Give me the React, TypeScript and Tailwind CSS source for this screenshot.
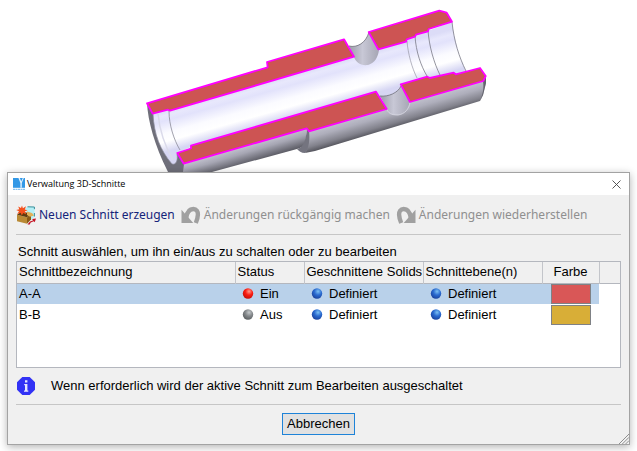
import type { ReactNode } from "react";

type Section = {
  name: string;
  status: "Ein" | "Aus";
  solids: string;
  planes: string;
  color: "red" | "yellow";
  selected?: boolean;
};

const SECTIONS: Section[] = [
  { name: "A-A", status: "Ein", solids: "Definiert", planes: "Definiert", color: "red", selected: true },
  { name: "B-B", status: "Aus", solids: "Definiert", planes: "Definiert", color: "yellow" },
];

const DOTS = {
  red: ["#ff9a8a", "#fb1d12", "#c80f08"],
  gray: ["#c4c8ca", "#85898c", "#5d6163"],
  blue: ["#7cc0f2", "#2b6bd0", "#1b45a0"],
};

const SWATCHES = {
  red: "bg-[#d95757]",
  yellow: "bg-[#d8ae37]",
};

// ─── Icons ────────────────────────────────────────────────────────────────────

function Dot({ tone }: Readonly<{ tone: keyof typeof DOTS }>) {
  const [light, mid, dark] = DOTS[tone];
  return (
    <svg viewBox="0 0 12 12" aria-hidden className="size-3 shrink-0">
      <defs>
        <radialGradient id={`dot-${tone}`} cx="0.6" cy="0.3" r="0.7">
          <stop offset="0" stopColor={light} />
          <stop offset="0.5" stopColor={mid} />
          <stop offset="1" stopColor={dark} />
        </radialGradient>
      </defs>
      <circle cx="6" cy="5.5" r="5.2" fill={`url(#dot-${tone})`} />
    </svg>
  );
}

function AppIcon() {
  return (
    <svg viewBox="0 0 12 12" aria-hidden className="size-3 shrink-0">
      <path d="M0 0h12v9.8H0z" fill="#3398e6" />
      <path d="M5.4 0h1.5l1.3 3.4L9.8 0h1L8.8 5v4.8H7.4V5z" fill="#e4f2fd" />
      <path d="M0 11.3h12" stroke="#6fb5ec" strokeWidth="1" strokeDasharray="2 .5" />
    </svg>
  );
}

function NewSectionIcon() {
  return (
    <svg viewBox="0 0 20 20" aria-hidden className="size-5 shrink-0">
      <path d="M9 3.5 12 1.5l6.5.6v9.5L15 15z" fill="#b5f0f6" />
      <path d="M11.5 1.8 18.4 2v2.2M18.4 8v3.5" fill="none" stroke="#3b8f9b" strokeWidth="1" />
      <path d="M1 9.8 11 12.3v6.4L1 16.2z" fill="#b98a35" />
      <path d="m11 12.3 4-4v6.2l-4 4.2z" fill="#8a5a14" />
      <path d="m1 9.8 4-3 10 1.5-4 4z" fill="#5e3c0d" />
      <path d="m11 6.5 5 1.5 2 2.5-4 1.2-3-1.7z" fill="#e1b15a" />
      <path d="m6 .5.9 2.7L10 1.2 8.8 4.4l2.7.8-2.7 1.2L10.4 9.5 7.2 7.9 5.8 10.5 4.7 7.7 1.2 9l1.8-2.8L.2 4.9l3.1-.6L2.2 1.4 5 3z" fill="#f4501c" />
      <path d="m11.5 19.5 2.5-3 3-1-.8-1.5 3.8-.5-1.3 3.8-1-1-3 1.2-1 2z" fill="#c41424" />
    </svg>
  );
}

function UndoIcon({ mirrored = false }: Readonly<{ mirrored?: boolean }>) {
  return (
    <svg viewBox="0 0 20 18" aria-hidden className="h-[18px] w-5 shrink-0">
      <g transform={mirrored ? "matrix(-1 0 0 1 20 0)" : undefined}>
        <path d="M.5 3.8V17h11.8z" fill="#a0a0a0" />
        <path
          d="M5.2 11.8C6 6.2 8.8 3 12.3 3c3.4 0 4.7 2.6 4.6 5.6-.1 3-.8 5.4-2.1 8.4"
          fill="none"
          stroke="#a0a0a0"
          strokeWidth="4.4"
        />
      </g>
    </svg>
  );
}

function InfoIcon() {
  return (
    <svg viewBox="0 0 18 18" aria-hidden className="size-[18px] shrink-0">
      <path d="M5.3 0h7.4L18 5.3v7.4L12.7 18H5.3L0 12.7V5.3z" fill="#3232f5" />
      <path d="M8 3.2h2.4v2.2H8zM7.2 7h3.2v6.6h.9v1.2H7v-1.2h1V8.2h-.8z" fill="#e6e6ff" />
    </svg>
  );
}

// ─── Cut shaft model ──────────────────────────────────────────────────────────

function ShaftModel() {
  return (
    <svg
      viewBox="0 0 637 172"
      preserveAspectRatio="xMidYMax meet"
      role="img"
      aria-label="3D-Schnitt"
      className="h-[172px] w-full"
    >
      <defs>
        <linearGradient id="bore" gradientUnits="userSpaceOnUse" x1="290" y1="75" x2="301" y2="114">
          <stop offset="0" stopColor="#dcdcf7" />
          <stop offset="0.12" stopColor="#e8e8fc" />
          <stop offset="0.25" stopColor="#e2e2fb" />
          <stop offset="0.55" stopColor="#fbfbff" />
          <stop offset="0.75" stopColor="#ffffff" />
          <stop offset="1" stopColor="#d6d6f3" />
        </linearGradient>
        <linearGradient id="outer" gradientUnits="userSpaceOnUse" x1="400" y1="104" x2="406" y2="125">
          <stop offset="0" stopColor="#c3c3d0" />
          <stop offset="0.35" stopColor="#aeaebb" />
          <stop offset="0.75" stopColor="#82828c" />
          <stop offset="1" stopColor="#55555d" />
        </linearGradient>
        <linearGradient id="outerLeft" gradientUnits="userSpaceOnUse" x1="240" y1="147" x2="245" y2="164">
          <stop offset="0" stopColor="#c3c3d0" />
          <stop offset="0.4" stopColor="#a6a6b3" />
          <stop offset="1" stopColor="#5c5c65" />
        </linearGradient>
        <linearGradient id="hole" x1="0" y1="0" x2="1" y2="0">
          <stop offset="0" stopColor="#9c9ca9" />
          <stop offset="0.45" stopColor="#c8c8d6" />
          <stop offset="1" stopColor="#a5a5b3" />
        </linearGradient>
      </defs>

      {/* End face and outer skin */}
      <path d="M147 103c1 18 7 41 21 69h16l1-8-7-11-25-39z" fill="#6f6f7a" />
      <path d="M184 164 307 128 305 146 297 149 212 172H183z" fill="url(#outerLeft)" />
      <path d="M307 128 311 132C311 141 310 148 305 153 301 153 299 151 297 149 303 148 306 141 307 128z" fill="#74747f" />
      <path d="M309 131 410 102 483 81 486 76V83L483 95 480 101 315 151 305 153C309 148 310 140 309 131z" fill="url(#outer)" />
      <path d="M483 81 486 76V83L483 95 480 101C483 93 484 88 483 81z" fill="#64646e" />

      {/* Bore */}
      <path
        d="M153 114 168 110 170 111 354 57 378 49 452 22C454 40 460 56 466 72L456 75 430 78 401 85 398 96 380 98 376 93 191 147 177 153C178 161 176 165 172 164 160 150 154 134 153 114z"
        fill="url(#bore)"
      />
      <path d="M153 114c1 20 7 36 19 50 4 1 6-3 5-10" fill="none" stroke="#8d8d9d" strokeWidth=".7" />
      <path d="M158 114c2 20 8 34 15 46" fill="none" stroke="#dadaea" strokeWidth="1.5" />
      <path d="M169 111c0 14 5 29 11 39" fill="none" stroke="#8a8a98" strokeWidth=".8" />
      <path d="M407 41c1 13 5 27 10 37" fill="none" stroke="#9797a5" strokeWidth=".7" />
      <path d="M415 36c1 16 6 30 12 40M428 30c1 16 6 33 12 45M452 22c2 19 7 35 14 49" fill="none" stroke="#7a7a86" strokeWidth=".8" />

      {/* Cross holes */}
      <path d="M349 46c8 2 17-3 20-14l10 18c-1 7-4 13-11 15-8 1-12-3-14-8z" fill="url(#hole)" />
      <path d="M349 46c8 2 17-3 20-14" fill="none" stroke="#6e6e78" strokeWidth=".8" />
      <path d="M380 96c8 1 18-3 21-10l9 16c-1 7-5 12-12 13-7 0-10-2-11-6z" fill="url(#hole)" />
      <path d="M380 96c8 1 18-3 21-10" fill="none" stroke="#6e6e78" strokeWidth=".8" />
      <path d="M387 109c1 4 4 6 11 6 7-1 11-6 12-13" fill="none" stroke="#dcdce6" strokeWidth=".8" />

      {/* Section faces */}
      <g fill="#cd5453" stroke="#ff00ff" strokeWidth="1.8" strokeLinejoin="round">
        <path d="M147 103.3 267.7 67.3 267 62 344 39.3 354 56.7 170 110.7 168 109.7 152.7 113.7z" />
        <path d="M368.7 32 439.3 10.7 446.7 12.7 452 21.7 428.7 29 428 31.3 416 34.7 415 36.7 406.7 39.3 406 41.7 378.3 49.3z" />
        <path d="M177.3 153 191 148.5 191 145.7 376 91.7 386.7 109 309 131.3 306.7 128.3 183.7 163.7z" />
        <path d="M400.7 84.3 427.3 76.7 430 78 453.7 72.7 455.7 74.3 480 68 485.7 76 483.3 81 410 102z" />
      </g>
    </svg>
  );
}

// ─── Dialog parts ─────────────────────────────────────────────────────────────

function ToolButton({
  icon,
  children,
  disabled = false,
}: Readonly<{ icon: ReactNode; children: ReactNode; disabled?: boolean }>) {
  return (
    <button
      type="button"
      disabled={disabled}
      className="flex items-center gap-[3px] whitespace-nowrap font-['Noto_Sans',sans-serif] text-[12px] leading-5 text-[#14247a] disabled:text-[#8f8f8f]"
    >
      {icon}
      {children}
    </button>
  );
}

function StateCell({ tone, children }: Readonly<{ tone: keyof typeof DOTS; children: ReactNode }>) {
  return (
    <td className="p-0 pl-[7px] group-aria-selected:bg-[#b9d1ea]">
      <span className="flex items-center gap-1.5">
        <Dot tone={tone} />
        {children}
      </span>
    </td>
  );
}

function SectionTable() {
  const head = "border-r border-[#c3c5ca] p-0 pl-0.5 text-left font-normal";
  return (
    <div className="min-h-[107px] border border-[#b4b7be] bg-white">
      <table className="w-full table-fixed border-collapse whitespace-nowrap">
        <colgroup>
          <col />
          <col className="w-[69px]" />
          <col className="w-[119px]" />
          <col className="w-[119px]" />
          <col className="w-[57px]" />
          <col className="w-[21px]" />
        </colgroup>
        <thead>
          <tr className="h-[21px] border-b border-[#b4b7be] bg-[#f0f0f0]">
            <th className={head}>Schnittbezeichnung</th>
            <th className={head}>Status</th>
            <th className={head}>Geschnittene Solids</th>
            <th className={head}>Schnittebene(n)</th>
            <th className="border-r border-[#c3c5ca] p-0 text-center font-normal">Farbe</th>
            <td className="p-0" />
          </tr>
        </thead>
        <tbody>
          {SECTIONS.map((s) => (
            <tr key={s.name} className="group h-[21px]" aria-selected={!!s.selected}>
              <td className="p-0 pl-0.5 group-aria-selected:bg-[#b9d1ea]">{s.name}</td>
              <StateCell tone={s.status === "Ein" ? "red" : "gray"}>{s.status}</StateCell>
              <StateCell tone="blue">{s.solids}</StateCell>
              <StateCell tone="blue">{s.planes}</StateCell>
              <td className="p-0 group-aria-selected:bg-[#b9d1ea]">
                <button
                  type="button"
                  aria-label={`Farbe ${s.name}`}
                  className={`mx-auto block h-5 w-10 border border-[#7f8185] ${SWATCHES[s.color]}`}
                />
              </td>
              <td className="p-0" />
            </tr>
          ))}
        </tbody>
      </table>
    </div>
  );
}

export default function App() {
  return (
    <div className="overflow-hidden bg-white pb-[7px] font-['Liberation_Sans',sans-serif] text-[13px] leading-4 text-black">
      <ShaftModel />

      <div
        role="dialog"
        aria-labelledby="dialog-title"
        className="relative mx-[7px] border border-[#a3a3a3] bg-[#f0f0f0] shadow-[0_2px_8px_rgba(0,0,0,0.3)]"
      >
        <header className="flex h-[22px] items-center gap-0.5 bg-white pl-[5px] pr-1.5">
          <AppIcon />
          <h1 id="dialog-title" className="flex-1 font-['Open_Sans',sans-serif] text-[9px] leading-4">
            Verwaltung 3D-Schnitte
          </h1>
          <button type="button" aria-label="Schließen" className="p-0.5">
            <svg viewBox="0 0 9 9" aria-hidden className="size-[9px]">
              <path d="m.5.5 8 8m0-8-8 8" stroke="#444" strokeWidth=".9" />
            </svg>
          </button>
        </header>

        <div className="px-2">
          <div className="flex h-10 items-center gap-1.5 border-b border-[#c6c6c6]">
            <ToolButton icon={<NewSectionIcon />}>Neuen Schnitt erzeugen</ToolButton>
            <ToolButton icon={<UndoIcon />} disabled>
              Änderungen rückgängig machen
            </ToolButton>
            <ToolButton icon={<UndoIcon mirrored />} disabled>
              Änderungen wiederherstellen
            </ToolButton>
          </div>

          <p className="pl-0.5 pt-2 leading-[18px]">
            Schnitt auswählen, um ihn ein/aus zu schalten oder zu bearbeiten
          </p>

          <SectionTable />

          <div className="flex h-[37px] items-center gap-4 border-b border-[#c6c6c6] pl-px">
            <InfoIcon />
            <p>Wenn erforderlich wird der aktive Schnitt zum Bearbeiten ausgeschaltet</p>
          </div>

          <div className="flex justify-center pb-[9px] pt-2">
            <button type="button" className="h-[22px] w-[73px] border border-[#1e83d8] bg-[#e1e1e1]">
              Abbrechen
            </button>
          </div>
        </div>

        <svg viewBox="0 0 10 10" aria-hidden className="absolute bottom-0 right-0 size-2.5">
          <path d="M0 10 10 0M3.3 10 10 3.3M6.6 10 10 6.6" stroke="#8f8f8f" strokeWidth="1" />
        </svg>
      </div>
    </div>
  );
}
